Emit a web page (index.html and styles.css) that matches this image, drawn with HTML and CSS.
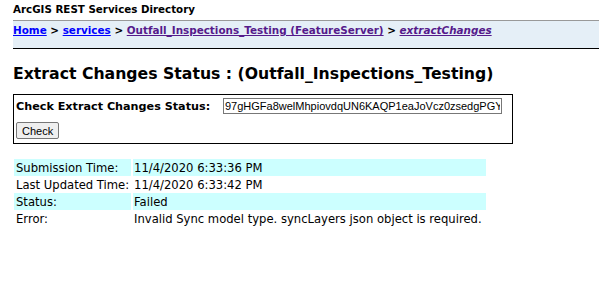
FILE: index.html
```html
<!DOCTYPE html>
<html lang="en">
  <head>
    <meta charset="UTF-8" />
    <title>Extract Changes Status</title>
    <link rel="stylesheet" href="styles.css">
  </head>
  <body>
    <div class="userTable">ArcGIS REST Services Directory</div>
    <div class="navTable">
      <a href="#" class="link">Home</a> &gt;
      <a href="#" class="link">services</a> &gt;
      <a href="#" class="visited">Outfall_Inspections_Testing (FeatureServer)</a> &gt;
      <a href="#" class="visited current">extractChanges</a>
    </div>

    <h2>Extract Changes Status : (Outfall_Inspections_Testing)</h2>

    <form class="checkForm">
      <div class="formRow">
        <label for="jobId">Check Extract Changes Status:</label>
        <input type="text" id="jobId" value="97gHGFa8welMhpiovdqUN6KAQP1eaJoVcz0zsedgPGYHk" />
      </div>
      <div class="formRow">
        <button type="button">Check</button>
      </div>
    </form>

    <table class="status">
      <tr class="odd">
        <td>Submission Time:</td>
        <td>11/4/2020 6:33:36 PM</td>
      </tr>
      <tr>
        <td>Last Updated Time:</td>
        <td>11/4/2020 6:33:42 PM</td>
      </tr>
      <tr class="odd">
        <td>Status:</td>
        <td>Failed</td>
      </tr>
      <tr>
        <td>Error:</td>
        <td>Invalid Sync model type. syncLayers json object is required.</td>
      </tr>
    </table>
  </body>
</html>
```

FILE: styles.css
```css
body {
  margin: 0 0 0 13px;
  padding-top: 3px;
  font-family: "DejaVu Sans", Verdana, sans-serif;
  color: #000;
}

.userTable {
  font-size: 10.3px;
  font-weight: bold;
  height: 17px;
}

.navTable {
  background-color: #e5eff7;
  border-top: 1px solid #999;
  border-bottom: 1px solid #000;
  height: 25px;
  padding: 2px 0 0 0;
  font-size: 10.4px;
  font-weight: bold;
  line-height: 14px;
}

.navTable a.link {
  color: #0000ff;
}

.navTable a.visited {
  color: #551a8b;
}

.navTable a.current {
  font-style: italic;
}

h2 {
  font-size: 15.7px;
  margin: 15px 0 11px 0;
}

.checkForm {
  width: 496px;
  border: 1px solid #000;
  padding: 3px 0 4px 2px;
}

.formRow {
  display: flex;
  align-items: center;
}

.formRow + .formRow {
  margin-top: 8px;
}

label {
  flex: none;
  width: 197px;
  margin-right: 10px;
  font-size: 11.2px;
  font-weight: bold;
  white-space: nowrap;
}

input {
  width: 275px;
  height: 14px;
  padding: 0 1px;
  border: 1px solid #777;
  font-family: "Liberation Sans", Arial, sans-serif;
  font-size: 11px;
}

button {
  font-family: "Liberation Sans", Arial, sans-serif;
  font-size: 11px;
  height: 17px;
  padding: 0 5px;
  border: 1px solid #777;
  border-radius: 2px;
  background-color: #efefef;
}

table.status {
  margin-top: 15px;
  border-collapse: separate;
  border-spacing: 2px 0;
  margin-left: -1px;
  font-size: 11.6px;
}

table.status td {
  width: 115px;
  height: 17px;
  padding: 0 0 0 2px;
  white-space: nowrap;
}

table.status td + td {
  width: 352px;
  padding-left: 1px;
}

tr.odd td {
  background-color: #ccffff;
}
```
